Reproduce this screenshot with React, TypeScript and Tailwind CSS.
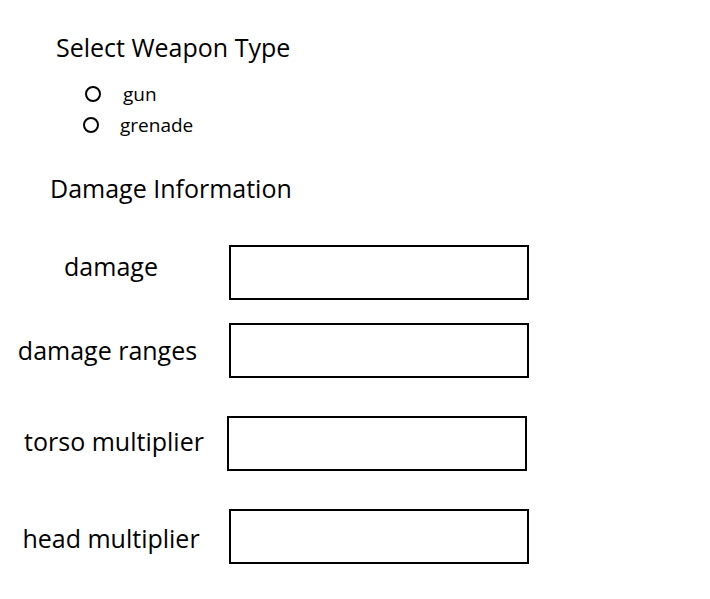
import React from 'react';

const fields = [
  { label: 'damage', rowMt: 'mt-[41px]', labelMt: 'mt-[5px]', shift: '', inputMl: 'ml-[7px]' },
  { label: 'damage ranges', rowMt: 'mt-[23px]', labelMt: 'mt-[11px]', shift: 'pr-[7px]', inputMl: 'ml-[7px]' },
  { label: 'torso multiplier', rowMt: 'mt-[38px]', labelMt: 'mt-[9px]', shift: 'pl-[6px]', inputMl: 'ml-[5px]' },
  { label: 'head multiplier', rowMt: 'mt-[38px]', labelMt: 'mt-[13px]', shift: '', inputMl: 'ml-[7px]' },
];

const App: React.FC = () => {
  return (
    <div className="w-[710px] h-[599px] bg-white text-black font-['Segoe_UI','Open_Sans',sans-serif]">
      <h2 className="pl-[56px] pt-[31px] text-[25px] leading-[32px]">Select Weapon Type</h2>

      {/* radio group */}
      <div className="mt-[20px] flex flex-col gap-[9px]">
        <label className="flex items-center ml-[85px] h-[22px]">
          <span className="w-[16px] h-[16px] rounded-full border-2 border-black" />
          <span className="ml-[22px] text-[19px] leading-[22px]">gun</span>
        </label>
        <label className="flex items-center ml-[83px] h-[22px]">
          <span className="w-[16px] h-[16px] rounded-full border-2 border-black" />
          <span className="ml-[21px] text-[19px] leading-[22px]">grenade</span>
        </label>
      </div>

      <h2 className="pl-[50px] mt-[36px] text-[25px] leading-[32px]">Damage Information</h2>

      {/* damage inputs */}
      <div className="flex flex-col">
        {fields.map(f => (
          <div key={f.label} className={`flex items-start ${f.rowMt}`}>
            <span className={`w-[222px] shrink-0 text-center text-[25px] leading-[32px] ${f.labelMt} ${f.shift}`}>
              {f.label}
            </span>
            <input type="text" className={`w-[300px] h-[55px] border-2 border-black outline-none ${f.inputMl}`} />
          </div>
        ))}
      </div>
    </div>
  );
};

export default App;
